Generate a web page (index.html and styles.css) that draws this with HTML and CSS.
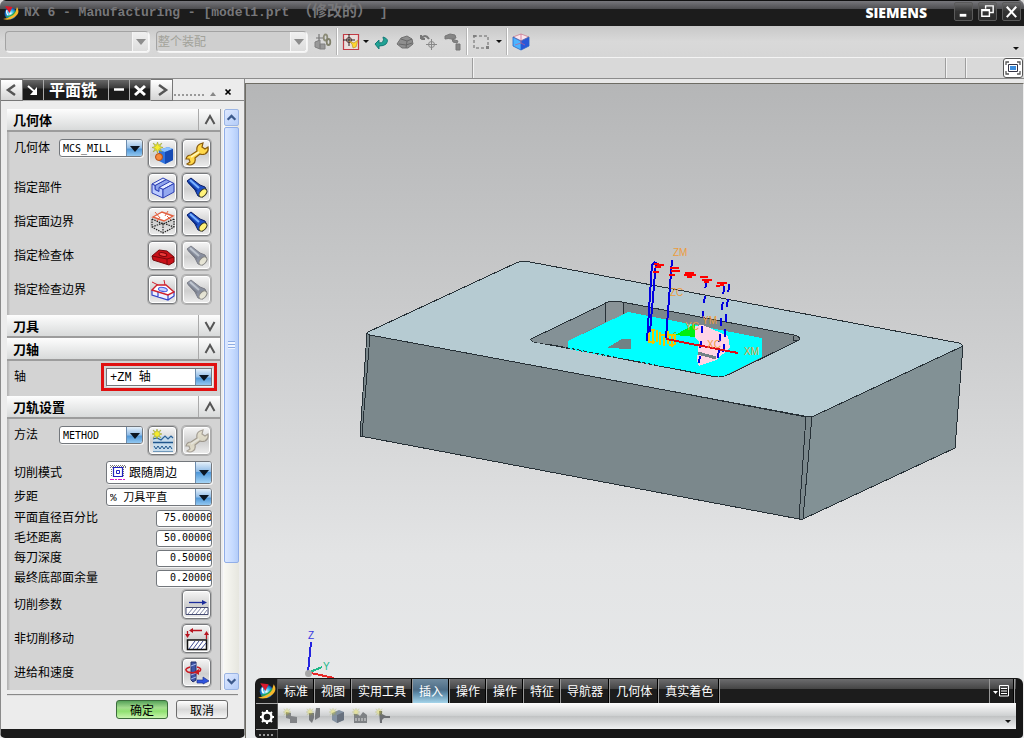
FILE: index.html
```html
<!DOCTYPE html>
<html lang="zh-CN">
<head>
<meta charset="utf-8">
<title>NX 6 - Manufacturing</title>
<link rel="stylesheet" href="styles.css">
</head>
<body>
<svg class="defs" aria-hidden="true">
  <defs>
    <radialGradient id="gBall"><stop offset="0" stop-color="#e8fbff"/><stop offset=".5" stop-color="#35b6ea"/><stop offset="1" stop-color="#0a4fa8"/></radialGradient>
    <symbol id="nx" viewBox="0 0 16 16">
      <circle cx="7.500" cy="8.500" r="6" fill="url(#gBall)"/>
      <path d="M14 2Q18 8 11 12.500Q6 16 0 14Q6 13 10 10Q13 7 14 2Z" fill="#f6b92c"/>
      <path d="M3 12Q10 11 12.500 6" fill="none" stroke="#2aa84a" stroke-width="1.200"/>
      <path d="M2 1L9.500 2L6.500 8Z" fill="#d9182c"/>
      <path d="M4 5Q3 8 5 10" stroke="#fff" stroke-width="1.200" fill="none"/>
    </symbol>
    <symbol id="torch" viewBox="0 0 24 24">
      <path d="M2 5L6 2L15 9L20 11L22 16L18 21L13 20L10 14Z" fill="#1d4fc4" stroke="#0a1c66" stroke-width="1"/>
      <path d="M5 4L14 12" stroke="#7db4ff" stroke-width="2"/>
      <path d="M3 6L12 15" stroke="#0b2c86" stroke-width="1.500"/>
      <ellipse cx="18" cy="17" rx="3" ry="4.800" transform="rotate(42 18 17)" fill="#fff27a" stroke="#3b3a20" stroke-width="1"/>
    </symbol>
    <symbol id="wrench" viewBox="0 0 24 24">
      <path d="M15 2L18 1L17 5L20 7L23 5Q24 10 20 12Q17 13 15 12L10 16Q11 20 8 22Q5 24 2 22L5 20L4 17L1 17Q2 13 6 13L12 9Q11 4 15 2Z" fill="#ffd84a" stroke="#8a5c0c" stroke-width="1.200"/>
      <path d="M6 15L14 10" stroke="#fff6b8" stroke-width="1.500"/>
    </symbol>
    <symbol id="star" viewBox="0 0 10 10">
      <path d="M5 0L6 3L9 1L7 4L10 5L7 6L9 9L6 7L5 10L4 7L1 9L3 6L0 5L3 4L1 1L4 3Z" fill="#f5ea2c" stroke="#8c9a30" stroke-width=".5"/>
    </symbol>
  </defs>
</svg>

<header class="titlebar">
  <svg class="i16"><use href="#nx"/></svg>
  <h1>NX 6 - Manufacturing - [model1.prt <span>（修改的）</span> ]</h1>
  <strong class="brand">SIEMENS</strong>
  <button class="win" aria-label="最小化"><svg viewBox="0 0 18 18"><path d="M5 13H12" stroke="#fff" stroke-width="3"/></svg></button>
  <button class="win" aria-label="还原"><svg viewBox="0 0 18 18"><path d="M7 6V3H15V10H11M3 7H11V14H3ZM3 8H11" fill="none" stroke="#fff" stroke-width="1.500"/></svg></button>
  <button class="win" aria-label="关闭"><svg viewBox="0 0 18 18"><path d="M4 4L14 15M14 4L4 15" stroke="#fff" stroke-width="2.200"/></svg></button>
</header>

<div class="toolbar">
  <div class="combo off filter"><select disabled aria-label="类型过滤器"><option></option></select><span class="drop"></span></div>
  <div class="combo off scope"><select disabled aria-label="选择范围"><option>整个装配</option></select><span class="drop"></span></div>
  <div class="tools">
    <button class="tool" aria-label="查找链接"><svg class="i18" viewBox="0 0 18 18"><path d="M2 5H9M5 1V9" stroke="#777" stroke-width="1.200"/><path d="M1 9L6 7V16L1 14ZM6 11H11V16H6Z" fill="#999" stroke="#808080"/><ellipse cx="11.500" cy="4.500" rx="1.800" ry="3" fill="none" stroke="#8c8c78" stroke-width="1.800"/><ellipse cx="14.500" cy="9" rx="1.800" ry="3" fill="none" stroke="#80806c" stroke-width="1.800"/></svg></button>
    <i class="sep"></i>
    <button class="tool" aria-label="选择过滤"><svg class="i18" viewBox="0 0 18 18"><path d="M1.500 1.500H16.500V16.500H1.500Z" fill="#eadfdd" stroke="#c23b45" stroke-width="1.200"/><path d="M7 1V13M1 7H13" stroke="#222"/><circle cx="7" cy="7" r="2.500" fill="none" stroke="#533"/><path d="M7 8L12 10L16 7L14 14L11 15L10 11Z" fill="#ffd630" stroke="#b08a20" stroke-width=".6"/></svg></button>
    <i class="caret"></i>
    <button class="tool" aria-label="返回"><svg class="i18" viewBox="0 0 18 18"><path d="M11 4Q18 6 14 11Q12 13 7 13V16L3 11L7 7V10Q13 10 11 4Z" fill="#21a394" stroke="#157b78"/></svg></button>
    <button class="tool" aria-label="实体"><svg class="i18" viewBox="0 0 18 18"><path d="M1 11L5 5L11 3L16 6L17 11L12 15L6 15Z" fill="#8e8e8e" stroke="#707070"/><path d="M5 6L11 8L16 6M11 8L10 15M3 11L10 12L16 10" stroke="#686868" fill="none"/></svg></button>
    <button class="tool" aria-label="旋转点"><svg class="i18" viewBox="0 0 18 18"><path d="M1 6Q5 0 9 6M1 6V2M1 6H5" fill="none" stroke="#777" stroke-width="2"/><path d="M11.500 6V17M6 11.500H17" stroke="#888"/><circle cx="11.500" cy="11.500" r="3" fill="none" stroke="#888"/></svg></button>
    <button class="tool" aria-label="移动对象"><svg class="i18" viewBox="0 0 18 18"><path d="M1 3L6 1L11 2L12 5L8 6Q4 5 1 6ZM8 6L14 8L13 10L9 9ZM12 11H16V17H12Z" fill="#858585" stroke="#777"/></svg></button>
    <i class="sep"></i>
    <button class="tool" aria-label="矩形选择"><svg class="i18" viewBox="0 0 18 18"><path d="M2 3H16V15H2Z" fill="none" stroke="#666" stroke-dasharray="3 2"/><path d="M1 2H4V4H1ZM14 13H17V16H14Z" fill="#808080"/></svg></button>
    <i class="caret wide"></i>
    <i class="sep"></i>
    <button class="tool" aria-label="着色"><svg class="i18" viewBox="0 0 18 18"><path d="M1 4L9 8V17L1 13Z" fill="#4cb4ff"/><path d="M9 8L17 4V13L9 17Z" fill="#2858d8"/><path d="M1 4L9 1L17 4L9 8Z" fill="#fbe5ec" stroke="#b84860" stroke-width=".5"/><path d="M1 4L9 8L17 4M9 8V17M1 4V13L9 17L17 13V4" stroke="#2466c8" stroke-width=".8" fill="none"/><path d="M9 1V10L3 12M9 10L13 12" stroke="#c86088" stroke-width=".7" fill="none"/></svg></button>
  </div>
  <i class="caret end"></i>
</div>

<div class="status">
  <span class="cue"></span><span class="msg"></span><span class="cell"></span>
  <span class="last"><button class="full" aria-label="全屏"><svg viewBox="0 0 18 18"><path d="M2 6V3H5M13 3H16V6M16 12V15H13M5 15H2V12" fill="none" stroke="#555" stroke-width="1.300"/><path d="M4.500 5.500H13.500V12.500H4.500Z" fill="#fff" stroke="#334"/><path d="M6 7H12V11H6Z" fill="#3c8ede"/></svg></button></span>
</div>

<main class="work">
  <aside class="dialog">
    <div class="tabs">
      <button class="tab light" aria-label="上一个"><svg viewBox="0 0 20 20"><path d="M13 5L6 10L13 15" fill="none" stroke="#555" stroke-width="2.500"/></svg></button>
      <button class="tab" aria-label="固定"><svg viewBox="0 0 20 20"><path d="M5 6L12 12" stroke="#fff" stroke-width="2"/><path d="M14 7V15H7Z" fill="#fff"/></svg></button>
      <h2>平面铣</h2>
      <button class="tab" aria-label="折叠"><svg viewBox="0 0 20 20"><path d="M5 9.500H15" stroke="#fff" stroke-width="2.500"/></svg></button>
      <button class="tab" aria-label="关闭对话框"><svg viewBox="0 0 20 20"><path d="M5 6L15 15M15 6L5 15" stroke="#fff" stroke-width="3"/></svg></button>
      <button class="tab light" aria-label="下一个"><svg viewBox="0 0 20 20"><path d="M7 5L14 10L7 15" fill="none" stroke="#555" stroke-width="2.500"/></svg></button>
      <div class="grip"><i class="dots"></i><i class="up"></i><button aria-label="关闭面板"><svg viewBox="0 0 8 8"><path d="M1.500 1.500L6.500 6.500M6.500 1.500L1.500 6.500" stroke="#000" stroke-width="1.700"/></svg></button></div>
    </div>

    <div class="scroller">
      <div class="form">
        <h3>几何体<button aria-label="折叠几何体"><svg viewBox="0 0 12 12"><path d="M1.500 10L6 2L10.500 10" fill="none" stroke="#555" stroke-width="2"/></svg></button></h3>
        <section class="group geometry">
          <div class="row top">
            <label for="geo">几何体</label>
            <div class="combo grow"><select id="geo"><option>MCS_MILL</option></select><span class="drop"></span></div>
            <button class="pic" aria-label="新建几何体"><svg viewBox="0 0 24 24"><path d="M8 8L17 5L22 7V18L14 22L8 19Z" fill="#2f74df"/><path d="M8 8L17 5L22 7L14 10Z" fill="#8cc2ff"/><path d="M14 10L22 7V18L14 22Z" fill="#174bb4"/><circle cx="8" cy="15" r="3.500" fill="#f58a3c" stroke="#b84c10"/><use href="#star" x="1" y="0" width="11" height="11"/></svg></button>
            <button class="pic" aria-label="编辑几何体"><svg><use href="#wrench"/></svg></button>
          </div>
          <div class="row">
            <span>指定部件</span>
            <button class="pic" aria-label="选择部件"><svg viewBox="0 0 24 24"><g stroke="#2c3fb4" stroke-linejoin="round"><path d="M4 9.500L15 3.500L19 5.500V10L8 15.500L4 13.500Z" fill="#8fa4ea"/><path d="M1 8L12 2L15 3.500L4 9.500Z" fill="#e4ebff"/><path d="M8 11.500L19 5.500L23 7.500L12 13.500Z" fill="#e4ebff"/><path d="M1 8L4 9.500V13.500L8 15.500V11.500L12 13.500V22L1 17Z" fill="#bccbff"/><path d="M12 13.500L23 7.500V16L12 22Z" fill="#93a8f0"/></g></svg></button>
            <button class="pic" aria-label="显示部件"><svg><use href="#torch"/></svg></button>
          </div>
          <div class="row">
            <span>指定面边界</span>
            <button class="pic" aria-label="选择面边界"><svg viewBox="0 0 24 24"><path d="M1 9V17L12 23L23 17V9M12 14V23M1 17L12 13L23 17M1 9L12 14L23 9" fill="none" stroke="#222" stroke-width="1.200" stroke-dasharray="1.500 1"/><path d="M2 7L11 2L22 6L13 11Z" fill="#fff" stroke="#e26040" stroke-width="1.400"/><path d="M4 2L9 8M17 1L14 6M6 11L9 7M20 10L16 6" stroke="#e26040"/></svg></button>
            <button class="pic" aria-label="显示面边界"><svg><use href="#torch"/></svg></button>
          </div>
          <div class="row">
            <span>指定检查体</span>
            <button class="pic" aria-label="选择检查体"><svg viewBox="0 0 24 24"><path d="M1 12L8 6L16 7L23 13V18L18 21L2 16Z" fill="#c91018" stroke="#74070b"/><path d="M1 12L16 15L23 13M16 15V20" fill="none" stroke="#7a080c"/><ellipse cx="12" cy="10.500" rx="4" ry="1.800" transform="rotate(12 12 10)" fill="#ee3b3b" stroke="#7a080c"/></svg></button>
            <button class="pic" disabled aria-label="显示检查体"><svg><use href="#torch"/></svg></button>
          </div>
          <div class="row">
            <span>指定检查边界</span>
            <button class="pic" aria-label="选择检查边界"><svg viewBox="0 0 24 24"><path d="M1 12V17L17 22L23 18V13M7 14V19M17 16V22" fill="#eef1ff" stroke="#3645c8" stroke-width="1.200"/><path d="M1 12L6 7L15 7L23 14L17 17Z" fill="#fff" stroke="#d0202c" stroke-width="1.400"/><ellipse cx="12" cy="11.500" rx="4.500" ry="2" transform="rotate(12 12 11)" fill="#c8d2ff" stroke="#4a5ce0" stroke-width="1.200"/><path d="M1 4L7 7M13 2L14 7" stroke="#d0202c" fill="none"/></svg></button>
            <button class="pic" disabled aria-label="显示检查边界"><svg><use href="#torch"/></svg></button>
          </div>
        </section>

        <h3>刀具<button aria-label="展开刀具"><svg viewBox="0 0 12 12"><path d="M1.500 2L6 10L10.500 2" fill="none" stroke="#555" stroke-width="2"/></svg></button></h3>
        <h3>刀轴<button aria-label="折叠刀轴"><svg viewBox="0 0 12 12"><path d="M1.500 10L6 2L10.500 10" fill="none" stroke="#555" stroke-width="2"/></svg></button></h3>
        <section class="group axis">
          <div class="row">
            <label for="axis">轴</label>
            <div class="combo half marked"><select id="axis"><option>+ZM 轴</option></select><span class="drop"></span></div>
          </div>
        </section>

        <h3>刀轨设置<button aria-label="折叠刀轨设置"><svg viewBox="0 0 12 12"><path d="M1.500 10L6 2L10.500 10" fill="none" stroke="#555" stroke-width="2"/></svg></button></h3>
        <section class="group path">
          <div class="row top">
            <label for="method">方法</label>
            <div class="combo grow"><select id="method"><option>METHOD</option></select><span class="drop"></span></div>
            <button class="pic" aria-label="新建方法"><svg viewBox="0 0 24 24"><path d="M2 7H22V22H2Z" fill="#c6dcec"/><path d="M2 10L6 9L10 11L14 7L17 10L20 7L22 9" fill="none" stroke="#2c6298" stroke-width="1.200"/><path d="M2 13.500H22" stroke="#1f568c" stroke-width="1.500"/><path d="M3 17L5 20L7 17L9 20L11 17L13 20L15 17L17 20L19 17L21 20" fill="none" stroke="#1f568c"/><path d="M2 22.500H22" stroke="#6e97ba"/><use href="#star" x="1" y="0" width="10" height="10"/></svg></button>
            <button class="pic" disabled aria-label="编辑方法"><svg><use href="#wrench"/></svg></button>
          </div>
          <div class="row mode">
            <label for="mode">切削模式</label>
            <div class="combo half tall"><select id="mode"><option>跟随周边</option></select>
              <svg class="lead" viewBox="0 0 16 16"><path d="M0 .500H16M1 1.500H16M0 2.500H3M13 2.500H16M1 4.500H3M13 4.500H15M1 6.500H3M13 6.500H15M1 8.500H3M13 8.500H15M1 10.500H3M13 10.500H15" stroke="#777" stroke-dasharray="1 1"/><path d="M3.500 2.500H12.500V11.500H3.500Z" fill="#fff" stroke="#2222c0" stroke-width="1.200"/><path d="M6.500 5.500H9.500V8.500H6.500Z" fill="none" stroke="#2222c0"/><path d="M0 14.500H16" stroke="#d020c8" stroke-dasharray="4 1 2 1"/></svg>
              <span class="drop"></span></div>
          </div>
          <div class="row step">
            <label for="step">步距</label>
            <div class="combo half"><select id="step"><option>% 刀具平直</option></select><span class="drop"></span></div>
          </div>
          <div class="row num"><label for="n1">平面直径百分比</label><input id="n1" type="text" value="75.00000"></div>
          <div class="row num"><label for="n2">毛坯距离</label><input id="n2" type="text" value="50.00000"></div>
          <div class="row num"><label for="n3">每刀深度</label><input id="n3" type="text" value=" 0.50000"></div>
          <div class="row num"><label for="n4">最终底部面余量</label><input id="n4" type="text" value=" 0.20000"></div>
          <div class="row act"><span>切削参数</span>
            <button class="pic" aria-label="切削参数"><svg viewBox="0 0 24 24"><path d="M4 9.500H19" stroke="#1c2c9c" stroke-width="1.300"/><path d="M17 7L22 9.500L17 12Z" fill="#1c2c9c"/><path d="M1 14.500H23V21.500H1Z" fill="#fff" stroke="#444a70"/><path d="M3 21L8 15M7 21L12 15M11 21L16 15M15 21L20 15M19 21L22 17" stroke="#8086a4"/></svg></button></div>
          <div class="row act"><span>非切削移动</span>
            <button class="pic" aria-label="非切削移动"><svg viewBox="0 0 24 24"><path d="M6 3.500H17M2.500 4V8M21.500 8V12" stroke="#b81420" stroke-width="1.300"/><path d="M4 3.500L8 1V6ZM0 7H5L2.500 11ZM19 8H24L21.500 4Z" fill="#b81420"/><path d="M2.500 13H21.500V22.500H2.500Z" fill="#fff" stroke="#111" stroke-width="1.500"/><path d="M4 22L10 14M8 22L14 14M12 22L18 14M16 22L21 16" stroke="#3c4890"/></svg></button></div>
          <div class="row act"><span>进给和速度</span>
            <button class="pic" aria-label="进给和速度"><svg viewBox="0 0 24 24"><path d="M6 1H11V19L8 21L6 19Z" fill="#3d55a8" stroke="#23306c"/><path d="M6 5L11 3M6 14L11 12M6 18L11 16" stroke="#a9b8ec"/><path d="M5 6Q-2 8 3 11Q9 13 15 10Q17 7 12 6" fill="none" stroke="#c81c24" stroke-width="1.600"/><path d="M9 11L14 8V14Z" fill="#c81c24"/><path d="M12 19H18V16L24 20L18 23V22H12Z" fill="#2f55e0" stroke="#1c308c" stroke-width=".7"/></svg></button></div>
        </section>
      </div>
      <div class="bar" aria-hidden="true">
        <span class="step"><svg viewBox="0 0 10 10"><path d="M1.500 7L5 3.500L8.500 7" fill="none" stroke="#3c5a8c" stroke-width="2"/></svg></span>
        <span class="thumb"></span>
        <span class="step"><svg viewBox="0 0 10 10"><path d="M1.500 3L5 6.500L8.500 3" fill="none" stroke="#3c5a8c" stroke-width="2"/></svg></span>
      </div>
    </div>
    <footer><button class="push ok">确定</button><button class="push">取消</button></footer>
  </aside>

  <div class="view">
    <svg class="scene" viewBox="246 84 777 654" role="img" aria-label="零件模型">
      <g shape-rendering="crispEdges">
        <g stroke="#263036" stroke-width="1" stroke-linejoin="round">
          <path d="M367 333L806 417L799 519L360 436Z" fill="#7b888c"/>
          <path d="M812 416L963 345L955 448L803 519Z" fill="#829195"/>
          <path d="M806 416L812 416L803 519L799 519Z" fill="#7b888c"/>
          <path d="M368 332L516 263Q520 261 530 262L959 343Q964 345 961 347L816 415Q811 418 804 416L370 335Q366 334 368 332Z" fill="#b6cbd2"/>
          <path d="M370 335L362 436" fill="none"/>
          <path d="M531 339L604 304Q609 300 622 302L794 335Q801 337 799 340L730 374Q721 378 711 376L540 343Q530 342 531 339Z" fill="#7b868a"/>
        </g>
        <path d="M532 339L605 304V322L568 341V348L540 343Q530 342 532 339Z" fill="#849196"/>
        <path d="M606 303Q614 301 623 303V317L606 323Z" fill="#899397"/>
        <path d="M606 303L605 322M623 303V316M793 336L794 341L799 340" fill="none" stroke="#263036"/>
        <path d="M568 341L628 312L762 338V357L730 373Q722 378 714 376L568 349Z" fill="#00ffff"/>
        <path d="M607 348L622 339H631V349Z" fill="#718185"/>
        <path d="M694 326L703 325L728 336L730 348L716 360L699 366L697 360L699 341L694 337Z" fill="#ffd5e5"/>
        <path d="M698 353L716 358" stroke="#718185" stroke-width="3"/>
        <path d="M675 335L695 324V337Z" fill="#00ef10"/>
        <path d="M666 338L676 332" stroke="#60c020"/>
        <path d="M548 344L711 376Q721 378 730 374L766 356" fill="none" stroke="#263036" stroke-dasharray="4 2"/>
        <path d="M648 330H655M649 329V343M653 331V344M657 330V342M661 335H675M660 332V345M664 337V346M668 331V344M672 335V347M675 334V345M649 342H655M669 345H674" stroke="#f2c500" stroke-width="2" fill="none"/>
        <g stroke="#0000e0" stroke-width="2" fill="none">
          <path d="M672 260L666 338M652 264L647 341M656 262L650 332M652 265L655 262"/>
          <path d="M706 281L699 365" stroke-dasharray="7 8"/>
          <path d="M724 286L718 359" stroke-dasharray="8 8"/>
          <path d="M729 284L723 356" stroke-dasharray="8 7"/>
        </g>
        <path d="M654 264H659M657 265H664M655 267H661M653 272H659M670 268H679M671 271H680M669 275H675M685 273H694M684 275H696M687 277H692M700 277H708M702 280H712M704 282H709M717 283H727M720 285H724M716 286H720" stroke="#ff0000" stroke-width="2"/>
        <path d="M666 339L738 353" stroke="#dd0c18" stroke-width="2"/>
        <path d="M311 642L308 672" stroke="#2424e0" stroke-width="2"/>
        <path d="M310 672L322 667" stroke="#20b888" stroke-width="2"/>
        <path d="M311 673L334 678" stroke="#e82828" stroke-width="2"/>
      </g>
      <circle cx="308.500" cy="673.500" r="3.500" fill="#a8a8a8"/>
      <g class="mark">
        <text x="673" y="256">ZM</text><text x="670" y="296">ZC</text><text x="702" y="324">YM</text>
        <text x="685" y="330">YC</text><text x="707" y="348">XC</text><text x="744" y="355">XM</text>
      </g>
      <text class="mark z" x="308" y="639">Z</text><text class="mark y" x="323" y="670">Y</text>
    </svg>

    <div class="dock">
      <div class="side">
        <span class="logo"><svg class="i18"><use href="#nx"/></svg></span>
        <button class="gear" aria-label="设置"><svg class="i16" viewBox="0 0 16 16"><circle cx="8" cy="8" r="4.500" fill="none" stroke="#fff" stroke-width="2.500"/><path d="M8 1V4M8 12V15M1 8H4M12 8H15M3 3L5 5M11 11L13 13M13 3L11 5M5 11L3 13" stroke="#fff" stroke-width="2"/></svg></button>
        <i class="dots"></i>
      </div>
      <div class="main">
        <nav>
          <button>标准</button><button>视图</button><button>实用工具</button><button class="on">插入</button><button>操作</button><button>操作</button><button>特征</button><button>导航器</button><button>几何体</button><button>真实着色</button>
          <button class="list" aria-label="工具条选项"><svg viewBox="0 0 18 16"><path d="M0 8H5L2.500 11Z" fill="#fff"/><path d="M6.500 2.500H15.500V13H6.500ZM8 5.500H14M8 8H14M8 10.500H14" fill="none" stroke="#fff"/></svg></button>
        </nav>
        <div class="strip">
          <button aria-label="创建程序" disabled><svg class="i16" viewBox="0 0 16 16"><path d="M3 4L8 5V8L14 9V15H7V11L3 10Z" fill="#818386"/><use href="#star" width="8" height="8" opacity=".35"/></svg></button>
          <button aria-label="创建刀具" disabled><svg class="i16" viewBox="0 0 16 16"><path d="M10 0H14V9L9 12V7ZM3 5H8V10L6 15L3 12Z" fill="#77797c"/><use href="#star" width="8" height="8" opacity=".35"/></svg></button>
          <button aria-label="创建几何体" disabled><svg class="i16" viewBox="0 0 16 16"><path d="M3 5L10 2L15 4V12L8 15L3 12Z" fill="#8492a2"/><path d="M8 7L15 4V12L8 15Z" fill="#68717e"/><use href="#star" width="8" height="8" opacity=".35"/></svg></button>
          <button aria-label="创建方法" disabled><svg class="i16" viewBox="0 0 16 16"><path d="M2 6H5L8 8L11 4L15 7V15H2Z" fill="#7e8184"/><path d="M4 10V13M7 10V13M10 10V13M13 10V13" stroke="#ddd"/><use href="#star" width="8" height="8" opacity=".35"/></svg></button>
          <button aria-label="创建操作" disabled><svg class="i16" viewBox="0 0 16 16"><path d="M4 3H7V6L11 8H15V10H9L7 12L7 15H5Z" fill="#6c6e72"/><use href="#star" width="8" height="8" opacity=".35"/></svg></button>
          <i class="caret end"></i>
        </div>
      </div>
    </div>
  </div>
</main>
</body>
</html>
```

FILE: styles.css
```css
* { box-sizing: border-box; }

body {
  margin: 0;
  min-height: 100vh;
  display: flex;
  flex-direction: column;
  background: #d9d9d9;
  color: #000;
  font: 12px/18px "DejaVu Sans Mono", "Noto Sans CJK SC", monospace;
}

button, input, select { font: inherit; color: inherit; margin: 0; padding: 0; border: 0; background: none; }
button { display: flex; align-items: center; justify-content: center; flex: none; }
h1, h2, h3 { margin: 0; }
svg { display: block; }
.defs { position: absolute; width: 0; height: 0; }
.i16 { width: 16px; height: 16px; flex: none; }
.i18 { width: 18px; height: 18px; flex: none; }

/* title bar */
.titlebar {
  display: flex;
  align-items: center;
  height: 26px;
  padding: 0 3px;
  gap: 5px;
  border-radius: 6px 6px 0 0;
  background: linear-gradient(#111 0 1px, #77777c 1px, #4d4d50 9px, #1c1c1c 9px);
}
.titlebar h1 {
  flex: 1;
  color: #77777a;
  font: bold 13px/24px "Liberation Mono", "Noto Sans CJK SC", monospace;
  white-space: pre;
}
.titlebar h1 span { font-size: 15px; line-height: 20px; }
.brand { color: #fff; font: 800 14px/26px "Open Sans", sans-serif; margin-right: 22px; }
.win {
  width: 19px;
  height: 19px;
  align-self: flex-start;
  margin-top: 2px;
  border: 1px solid #5a5a5a;
  border-radius: 2px;
  background: linear-gradient(#6a6a6c, #333 50%, #2b2b2b);
}
.win svg { width: 17px; height: 17px; }

/* selection bar */
.toolbar {
  display: flex;
  align-items: center;
  height: 32px;
  padding: 0 5px;
  border-bottom: 1px solid #f4f4f4;
  background: linear-gradient(#c8c8c8, #d9d9d9 50%, #d6d6d6);
}
.filter { width: 144px; margin-right: 7px; }
.scope { width: 151px; margin-right: 4px; }
.tools { display: flex; align-items: center; flex: 1; }
.tool { width: 24px; height: 24px; }
.sep { width: 4px; height: 27px; background: linear-gradient(90deg, transparent 1px, #b5b5b5 1px 2px, #fff 2px 3px, transparent 3px); }
.caret { width: 6px; height: 3px; background: #111; clip-path: polygon(0 0, 100% 0, 50% 100%); }
.caret.wide { margin: 0 3px; }
.caret.end { align-self: flex-end; margin: 0 0 7px auto; }

.status { display: flex; height: 21px; border-bottom: 1px solid #8c8c8c; background: #d9d9d9; }
.status span { border-right: 2px groove #f2f2f2; }
.cue { flex: 473; }
.msg { flex: 473; }
.cell { width: 20px; }
.status .last { display: flex; justify-content: flex-end; width: 57px; padding-right: 1px; border: 0; }
.full { width: 20px; height: 20px; border: 1px solid #555; border-radius: 3px; background: #fff; }
.full svg { width: 18px; height: 18px; }

/* drop-down lists */
.combo {
  display: grid;
  height: 18px;
  border: 1px solid #73777c;
  border-radius: 3px;
  background: #fff;
  box-shadow: 1px 1px 0 #f3f3f3;
  overflow: hidden;
}
.combo > * { grid-area: 1 / 1; }
.combo select { appearance: none; width: 100%; height: 100%; padding: 0 18px 0 3px; font-size: 10px; opacity: 1; }
.drop {
  justify-self: end;
  width: 16px;
  pointer-events: none;
  border-left: 1px solid #6c8cae;
  background: linear-gradient(#e4f0fa, #8fbbe6 45%, #4f97d8 50%, #a5d5f7);
  display: flex;
  align-items: center;
  justify-content: center;
}
.drop::after { content: ""; border: solid transparent; border-width: 6px 5px 0; border-top-color: #0b1622; }
.combo.off { height: 21px; border: 1px solid #a3a3a3; border-right-color: #f8f8f8; border-bottom-color: #f8f8f8; background: #cfcfcf; color: #a2a29a; border-radius: 4px; }
.combo.off select { font-size: 12px; padding-left: 1px; }
.combo.off .drop { border-color: #f5f5f5; background: linear-gradient(#f0f0f0, #dcdcdc); }
.combo.off .drop::after { border-top-color: #8c8c8c; }
.grow { flex: 1; }
.half { width: 106px; margin-right: -1px; }
.tall { height: 23px; }
.marked { outline: 3px solid #e01010; outline-offset: 2px; border-radius: 0; }
#mode { padding-left: 22px; font-size: 12px; }
#axis, #step { font-family: "Liberation Mono", "Noto Sans CJK SC", monospace; font-size: 12px; }
#step { font-size: 11px; }
.lead { width: 16px; height: 16px; margin-left: 3px; align-self: center; pointer-events: none; }

/* work area */
.work { display: flex; flex: 1; background: #e8e8e8; }
.dialog {
  flex: none;
  width: 245px;
  display: flex;
  flex-direction: column;
  border: 1px solid #8a8a8a;
  border-width: 0 1px 9px;
  border-bottom-color: #1b1b1b;
  border-radius: 0 0 5px 5px;
  background: #ececec;
}
.tabs { display: flex; height: 22px; }
.tab { width: 21px; border: 1px solid #aaa; border-width: 1px 1px 1px 0; background: linear-gradient(#666, #3a3a3a 40%, #1b1b1b 45%); }
.tab.light { width: 22px; background: linear-gradient(#fff, #d4d4d4); border-color: #777; }
.tab svg { width: 20px; height: 20px; }
.tabs h2 {
  width: 65px;
  color: #fff;
  font: bold 16px/18px "Noto Sans CJK SC", sans-serif;
  text-align: center;
  border: 1px solid #aaa;
  border-width: 1px 1px 1px 0;
  padding-right: 6px;
  background: linear-gradient(#666, #3a3a3a 40%, #1b1b1b 45%);
}
.grip { flex: 1; display: flex; align-items: flex-end; gap: 6px; padding: 0 12px 4px 1px; border-bottom: 1px solid #888; }
.dots { width: 30px; height: 2px; background: repeating-linear-gradient(90deg, #999 0 2px, transparent 2px 4px); }
.grip .up { border: solid transparent; border-width: 0 3px 4px; border-bottom-color: #888; }
.grip button { width: 8px; height: 8px; margin-left: auto; }
.grip svg { width: 8px; height: 8px; }

.scroller { display: flex; flex: 1; padding: 8px 5px 0 6px; gap: 2px; }
.form { flex: 1; display: flex; flex-direction: column; border-right: 1px solid #999; }
.form h3 {
  display: flex;
  align-items: center;
  justify-content: space-between;
  height: 23px;
  padding-left: 6px;
  font: bold 13px/18px "Noto Sans CJK SC", sans-serif;
  border-bottom: 2px solid #9c9c9c;
  background: linear-gradient(#fdfdfd, #d8dada);
}
.form h3 button { width: 22px; height: 21px; border-left: 1px solid #aaa; }
.form h3 svg { width: 12px; height: 12px; }
.group { padding: 7px 9px 0 7px; background: linear-gradient(90deg, #b5b5b5 0 1px, #d3d3d3 3px); }
.row { display: flex; align-items: center; gap: 5px; }
.row > :first-child { margin-right: auto; white-space: nowrap; }
.row.top { align-items: flex-start; }
.row.top label { width: 40px; margin-right: 0; }
.geometry { display: grid; gap: 5px; padding-bottom: 11px; }
.axis { padding-bottom: 10px; }
.path { flex: 1; padding-bottom: 3px; }
.mode { margin-top: 6px; }
.row.step { margin: 4px 0 2px; }
.num { height: 20px; }
.act { margin-bottom: 5px; }
.num + .act { margin-top: 2px; }
.act:last-child { margin-bottom: 0; }
.num input {
  width: 56px;
  height: 17px;
  margin-right: -1px;
  padding: 0 0 0 7px;
  border: 1px solid #73777c;
  border-radius: 3px;
  background: #fff;
  box-shadow: 1px 1px 0 #f3f3f3;
  font-size: 10px;
}
.pic {
  width: 29px;
  height: 29px;
  border: 1px solid #77797c;
  border-radius: 4px;
  background: linear-gradient(#f6f6f6, #cfcfcf 55%, #ededed);
  box-shadow: inset 0 0 0 1px #fff, 0 0 0 1px #b0b0b0;
}
.pic svg { width: 24px; height: 24px; }
.pic:disabled { border-color: #aaa; }
.pic:disabled svg { filter: grayscale(.75); opacity: .5; }

.bar { width: 16px; display: flex; flex-direction: column; gap: 1px; border-left: 1px solid #f8f8f8; background: linear-gradient(90deg, #f8f8f3, #e6e6df); }
.bar .step { flex: none; height: 17px; border: 1px solid #9bb5e4; border-radius: 2px; background: linear-gradient(135deg, #dfe9ff, #b3ccf8); display: flex; align-items: center; justify-content: center; }
.bar .step svg { width: 11px; height: 11px; }
.thumb {
  flex: 0 1 75%;
  margin-bottom: auto;
  border: 1px solid #91aee8;
  border-radius: 2px;
  background:
    repeating-linear-gradient(#8eace4 0 1px, #eef4ff 1px 3px) center / 7px 8px no-repeat,
    linear-gradient(90deg, #dce8ff, #c5daff 60%, #b4cdf8);
}
.dialog footer { display: flex; justify-content: flex-end; gap: 8px; margin: 4px 6px 0; padding: 4px 10px 10px; border-top: 2px groove #ddd; }
.push { width: 52px; height: 19px; border: 1px solid #6c6c6c; border-radius: 3px; background: linear-gradient(#fff, #d8d8d8 50%, #f6f6f6); font-family: "Noto Sans CJK SC", sans-serif; }
.push.ok { border-color: #3c6c3c; background: linear-gradient(#57a35a, #a5dd8f 40%, #8fe070 60%, #c8f5ae); }

/* graphics window */
.view {
  position: relative;
  flex: 1;
  margin-top: 4px;
  border: 1px solid #6e6c64;
  border-right-color: #eee;
  border-bottom: 0;
  background: linear-gradient(#b5b6b7, #cdcecf 40%, #e3e4e5 72%, #e8eaeb);
}
.scene { position: absolute; inset: 0; width: 100%; height: 100%; }
.mark { font: 10px "Liberation Sans", sans-serif; fill: #ec9c3c; }
.mark.z { fill: #3838e0; }
.mark.y { fill: #20b888; }

.dock {
  position: absolute;
  left: 9px;
  right: 0;
  bottom: 0;
  display: flex;
  padding: 1px 7px 0 1px;
  border-radius: 6px 6px 4px 4px;
  background: #161616;
  color: #fff;
}
.side { width: 22px; display: flex; flex-direction: column; align-items: center; background: #1c1c1c; border-right: 1px solid #555; border-radius: 5px 0 0 4px; }
.logo { height: 24px; padding-top: 3px; }
.gear { width: 22px; height: 27px; border: 1px solid #aaa; border-width: 1px 0; }
.side .dots { width: 16px; margin-top: 4px; }
.dock .main { flex: 1; padding-bottom: 9px; }
.dock nav { display: flex; height: 24px; background: linear-gradient(#6c6c6e, #444 42%, #1c1c1c 43%); }
.dock nav button { padding: 0 5px 0 6px; border: solid #000; border-width: 0 1px 0 0; box-shadow: 1px 0 0 #999; font-family: "Noto Sans CJK SC", sans-serif; line-height: 16px; margin-right: 1px; }
.dock nav .on { background: linear-gradient(#6f8ba0, #4c6c86 45%, #5c8aa8 60%, #a4d4ea); }
.dock nav .list { width: 24px; margin: 0 2px 0 auto; padding: 0; box-shadow: -1px 0 0 #999, 1px 0 0 #999; }
.list svg { width: 18px; height: 16px; }
.strip { display: flex; align-items: center; gap: 7px; height: 26px; padding: 0 5px; background: linear-gradient(#fdfdfd, #cfd1d2 48%, #c0c2c3 50%, #f0f1f2); }
.strip .caret.end { margin-bottom: 6px; }
```
